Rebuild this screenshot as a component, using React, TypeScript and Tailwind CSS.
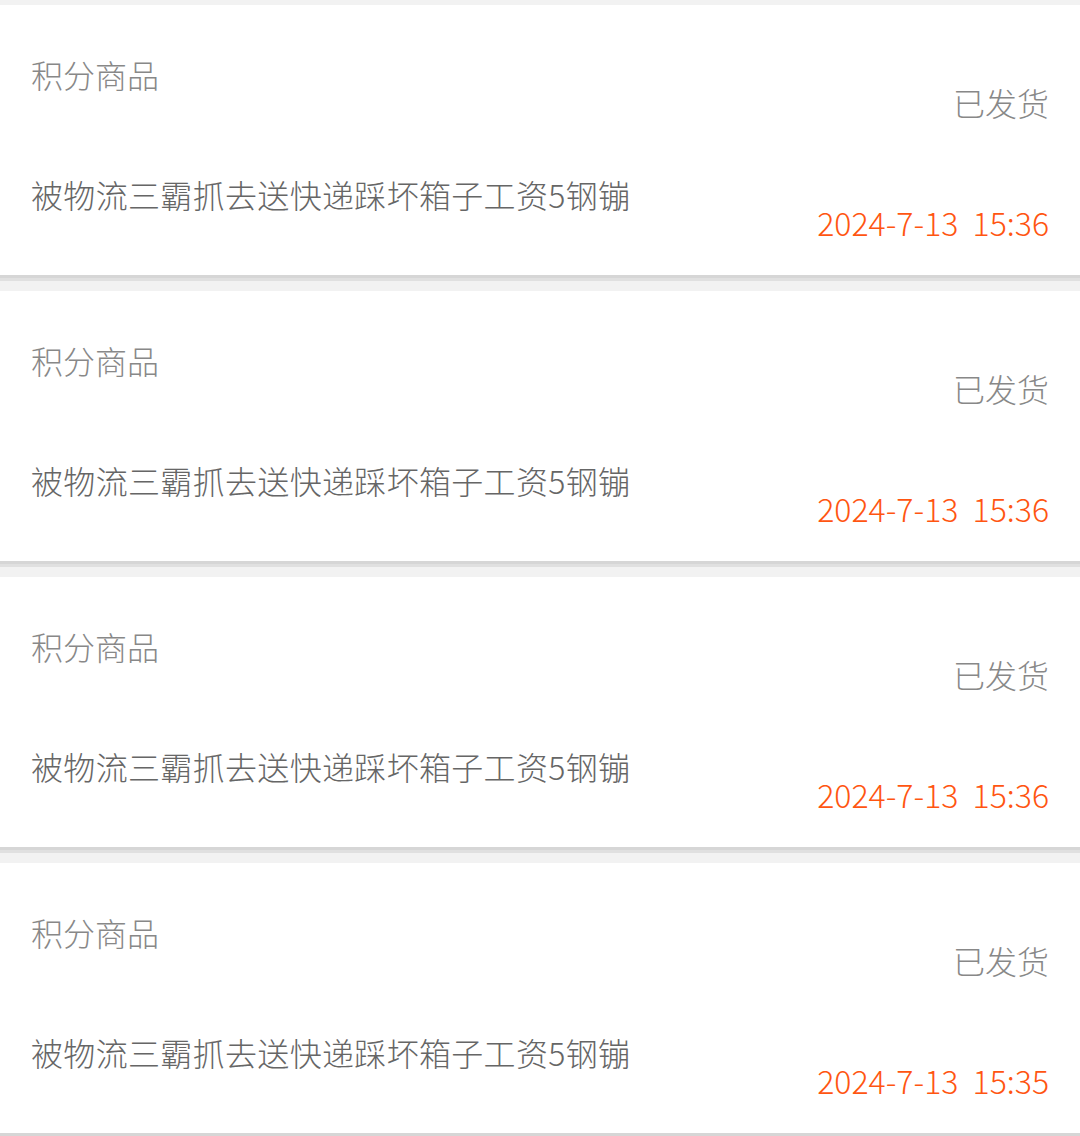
import React from "react";

const items = [
  { time: "2024-7-13  15:36" },
  { time: "2024-7-13  15:36" },
  { time: "2024-7-13  15:36" },
  { time: "2024-7-13  15:35" },
];

export default function App() {
  return (
    <div
      className="min-h-[1136px] w-[1080px] bg-[#f2f2f2] pt-[5px] flex flex-col gap-[10px] font-light"
      style={{ fontFamily: '"Noto Sans CJK SC", "Noto Sans", sans-serif' }}
    >
      {items.map((it, i) => (
        <div key={i} className="flex flex-col">
          <div className="h-[270px] bg-white px-[31px] flex justify-between">
            <div className="flex flex-col pt-[49px] gap-[80px]">
              <div className="text-[32px] leading-[40px] text-[#888888]">积分商品</div>
              <div className="text-[32px] leading-[40px] text-[#666666] tracking-[0.33px]">
                被物流三霸抓去送快递踩坏箱子工资5钢镚
              </div>
            </div>
            <div className="flex flex-col items-end pt-[77px] gap-[80px]">
              <div className="text-[32px] leading-[40px] text-[#888888]">已发货</div>
              <div className="text-[32px] leading-[40px] text-[#ff5511] whitespace-pre">
                {it.time}
              </div>
            </div>
          </div>
          <div className="h-[3px] bg-[#d6d6d6]" />
          <div className="h-[3px] bg-[#e0e0e0]" />
        </div>
      ))}
    </div>
  );
}
